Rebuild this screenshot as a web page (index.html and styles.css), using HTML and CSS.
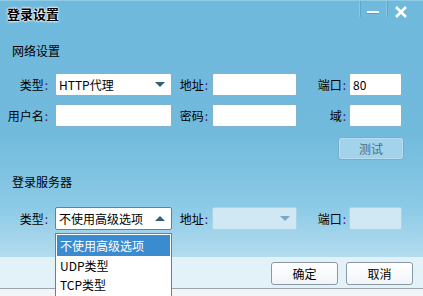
FILE: index.html
```html
<!DOCTYPE html>
<html lang="zh-CN">
<head>
  <meta charset="UTF-8">
  <title>登录设置</title>
  <link rel="stylesheet" href="styles.css">
</head>
<body>
  <div class="window">
    <div class="titlebar">
      <span class="title">登录设置</span>
      <div class="controls">
        <span class="ctl ctl-min"><span class="dash"></span></span>
        <span class="ctl ctl-close">
          <svg width="14" height="12" viewBox="0 0 14 12">
            <path d="M2 1 L12 11 M12 1 L2 11" stroke="#ffffff" stroke-width="2.6" fill="none"/>
          </svg>
        </span>
      </div>
    </div>

    <div class="section-title first">网络设置</div>

    <div class="form-grid">
      <label class="lbl l1">类型<span class="colon">:</span></label>
      <div class="field select"><span>HTTP代理</span><span class="arrow down"></span></div>
      <label class="lbl l3">地址<span class="colon">:</span></label>
      <div class="field"></div>
      <label class="lbl l5">端口<span class="colon">:</span></label>
      <div class="field"><span>80</span></div>

      <label class="lbl l1">用户名<span class="colon">:</span></label>
      <div class="field"></div>
      <label class="lbl l3">密码<span class="colon">:</span></label>
      <div class="field"></div>
      <label class="lbl l5">域<span class="colon">:</span></label>
      <div class="field"></div>
    </div>

    <div class="test-row">
      <button class="btn-test">测试</button>
    </div>

    <div class="section-title second">登录服务器</div>

    <div class="form-grid server">
      <label class="lbl l1">类型<span class="colon">:</span></label>
      <div class="field select open"><span>不使用高级选项</span><span class="arrow up"></span></div>
      <label class="lbl l3">地址<span class="colon">:</span></label>
      <div class="field select disabled"><span></span><span class="arrow down"></span></div>
      <label class="lbl l5">端口<span class="colon">:</span></label>
      <div class="field disabled"></div>
    </div>

    <div class="footer">
      <button class="btn">确定</button>
      <button class="btn">取消</button>
    </div>
    <div class="bottom-strip"></div>

    <ul class="dropdown-list">
      <li class="active">不使用高级选项</li>
      <li>UDP类型</li>
      <li>TCP类型</li>
    </ul>
  </div>
</body>
</html>
```

FILE: styles.css
```css
body {
  margin: 0;
  padding: 0;
  font-family: "Noto Sans CJK SC", "Liberation Sans", sans-serif;
  font-size: 12px;
  color: #000;
}

.window {
  position: relative;
  width: 423px;
  height: 296px;
  overflow: hidden;
  background: linear-gradient(to bottom, #6fb9dc 0%, #71badc 45%, #8ccae6 70%, #b4dcee 87%);
}

/* title bar */
.titlebar {
  display: flex;
  justify-content: space-between;
  height: 30px;
  border-top: 1px solid #8fcae6;
  box-sizing: border-box;
}

.title {
  padding: 4px 0 0 7px;
  font-size: 13px;
  font-weight: bold;
  line-height: 18px;
  text-shadow: 0 0 2px #fff, 0 0 2px #fff, 0 0 3px #fff;
}

.controls {
  display: flex;
  margin-right: 8px;
}

.ctl {
  display: flex;
  justify-content: center;
  align-items: flex-start;
  height: 16px;
  border-left: 1px solid #8cc6e0;
  box-shadow: inset 1px 0 0 #5fa6c8;
}

.ctl-min {
  width: 26px;
  padding-top: 10px;
  height: 6px;
}

.dash {
  width: 12px;
  height: 2px;
  background: #fff;
  box-shadow: 0 1px 0 #5f9ab8;
}

.ctl-close {
  width: 28px;
  padding-top: 5px;
  height: 11px;
}

/* sections */
.section-title {
  padding-left: 12px;
  line-height: 16px;
}

.section-title.first {
  margin-top: 13px;
}

.section-title.second {
  margin-top: 14px;
}

.form-grid {
  display: grid;
  grid-template-columns: 55px 117px 40px 85px 52px 53px;
  row-gap: 8px;
  margin-top: 14px;
}

.form-grid.server {
  margin-top: 17px;
}

.lbl {
  text-align: right;
  line-height: 23px;
  white-space: nowrap;
}

.lbl.l1 { padding-right: 7px; }
.lbl.l3 { padding-right: 4px; }
.lbl.l5 { padding-right: 3px; }

.colon {
  color: #4b1673;
  padding-left: 1px;
}

.field {
  display: flex;
  align-items: center;
  justify-content: space-between;
  height: 23px;
  box-sizing: border-box;
  padding: 0 4px 0 3px;
  background: #fff;
  border: 1px solid #7fb3cf;
  border-radius: 2px;
  line-height: 21px;
}

.field.open {
  border-color: #3b8bcf;
}

.field.disabled {
  background: #cfe8f4;
  border-color: #a9d3e7;
}

.arrow {
  width: 0;
  height: 0;
  margin-right: 2px;
  border-left: 5px solid transparent;
  border-right: 5px solid transparent;
}

.arrow.down {
  border-top: 5px solid #2d5e7e;
}

.arrow.up {
  border-bottom: 5px solid #2d5e7e;
}

.disabled .arrow.down {
  border-top-color: #7ea8c2;
}

.test-row {
  display: flex;
  justify-content: flex-end;
  padding-right: 19px;
  margin-top: 10px;
}

.btn-test {
  width: 66px;
  height: 23px;
  font-family: inherit;
  font-size: 12px;
  color: #4d6f82;
  background: #a2d3ea;
  border: 1px solid #77aecb;
  border-radius: 3px;
  box-shadow: inset 0 0 0 1px #b6def0;
}

/* footer */
.footer {
  display: flex;
  justify-content: flex-end;
  gap: 8px;
  height: 31px;
  margin-top: 27px;
  padding: 5px 10px 0 0;
  box-sizing: border-box;
  background: #e3f1f8;
}

.btn {
  width: 67px;
  height: 23px;
  font-family: inherit;
  font-size: 12px;
  color: #000;
  background: linear-gradient(to bottom, #ffffff, #f1f5f7);
  border: 1px solid #8a9aa4;
  border-radius: 3px;
}

.bottom-strip {
  height: 8px;
  border-top: 1px solid #9aa4aa;
  background: #f2f4f5;
}

/* open dropdown over the footer */
.dropdown-list {
  position: absolute;
  left: 55px;
  top: 233px;
  width: 117px;
  height: 70px;
  margin: 0;
  padding: 1px;
  box-sizing: border-box;
  list-style: none;
  background: #fff;
  border: 1px solid #3b8bcf;
}

.dropdown-list li {
  height: 19px;
  line-height: 19px;
  padding-left: 3px;
}

.dropdown-list li.active {
  height: 21px;
  line-height: 21px;
  color: #fff;
  background: #3a8bd0;
}
```
